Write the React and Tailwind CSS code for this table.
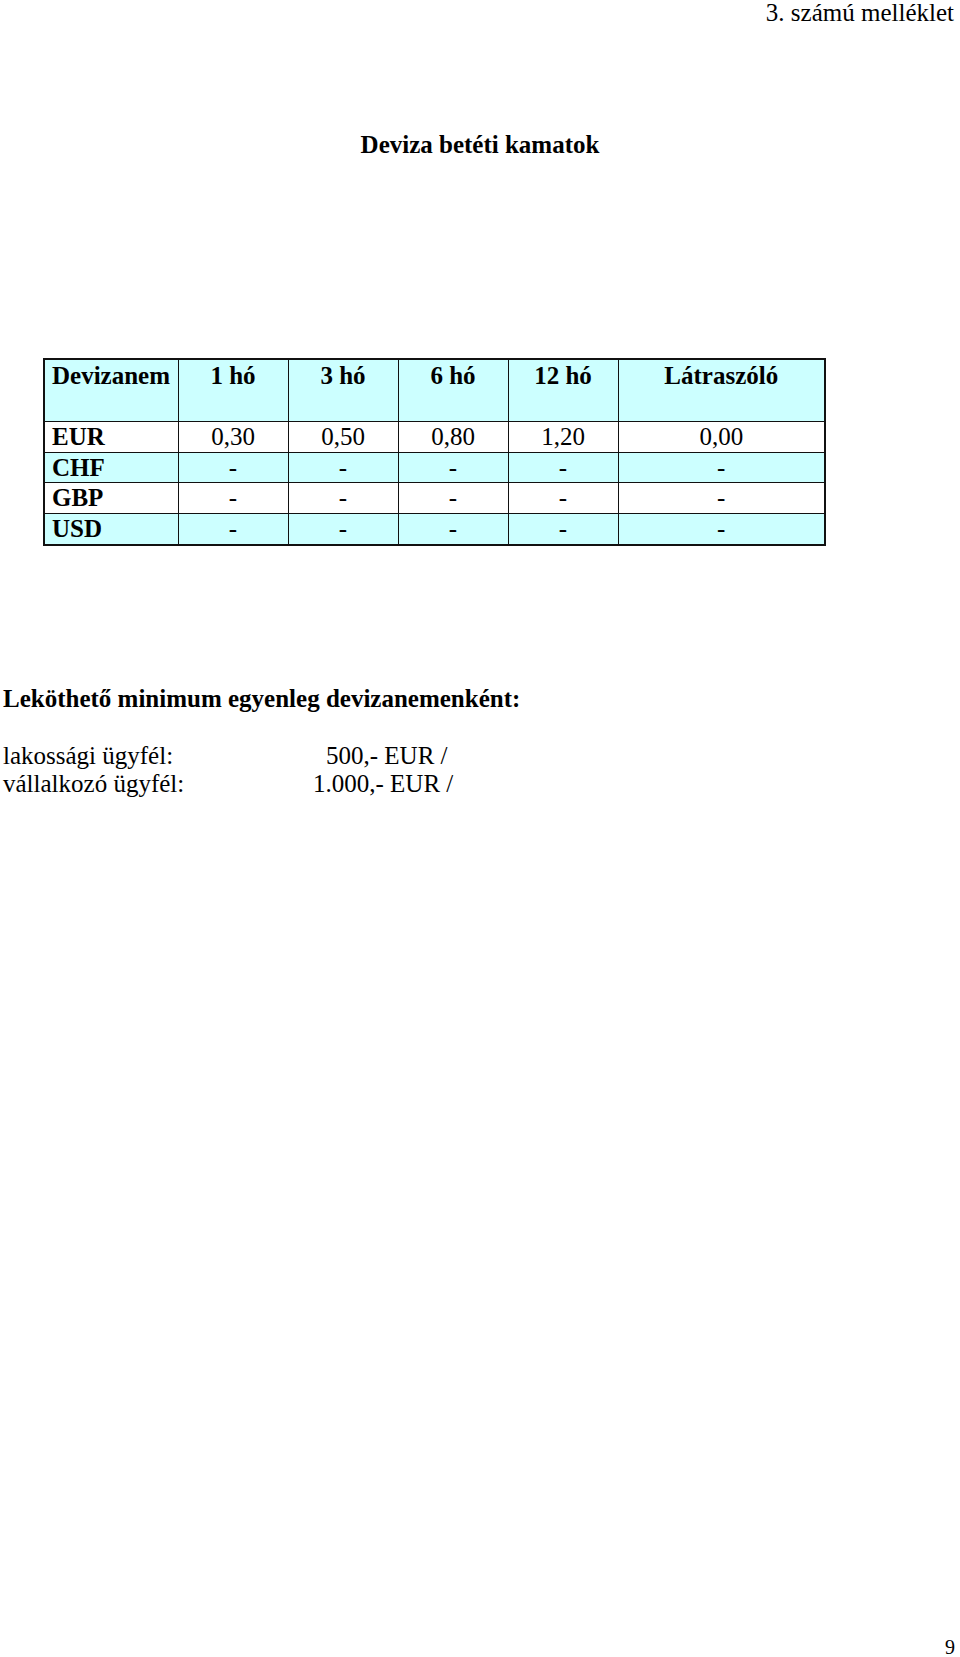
import React from 'react';

const rows = [
  { code: 'EUR', values: ['0,30', '0,50', '0,80', '1,20', '0,00'], bg: 'bg-white', h: 'h-[31px]' },
  { code: 'CHF', values: ['-', '-', '-', '-', '-'], bg: 'bg-[#ccffff]', h: 'h-[30px]' },
  { code: 'GBP', values: ['-', '-', '-', '-', '-'], bg: 'bg-white', h: 'h-[31px]' },
  { code: 'USD', values: ['-', '-', '-', '-', '-'], bg: 'bg-[#ccffff]', h: 'h-[32px]' },
];

const headers = ['1 hó', '3 hó', '6 hó', '12 hó', 'Látraszóló'];

const App = () => {
  return (
    <div
      className="h-[1657px] w-[960px] overflow-hidden bg-white text-black flex flex-col text-[25px] leading-[25px]"
      style={{ fontFamily: '"Liberation Serif", "Times New Roman", serif' }}
    >
      <div className="text-right pr-[6px] pt-0">3. számú melléklet</div>

      <h1 className="mt-[107px] text-center font-bold">Deviza betéti kamatok</h1>

      <div className="mt-[201px] ml-[43px]">
        <table className="table-fixed border-collapse border-2 border-[#111]">
          <colgroup>
            <col className="w-[134px]" />
            <col className="w-[110px]" />
            <col className="w-[110px]" />
            <col className="w-[110px]" />
            <col className="w-[110px]" />
            <col className="w-[207px]" />
          </colgroup>
          <thead>
            <tr className="h-[62px] bg-[#ccffff]">
              <th className="border border-[#111] align-top text-left font-bold pl-[7px] pt-[3px]">Devizanem</th>
              {headers.map((h) => (
                <th key={h} className="border border-[#111] align-top text-center font-bold pt-[3px]">
                  {h}
                </th>
              ))}
            </tr>
          </thead>
          <tbody>
            {rows.map((row) => (
              <tr key={row.code} className={`${row.bg} ${row.h}`}>
                <td className="border border-[#111] text-left font-bold pl-[7px] py-0">{row.code}</td>
                {row.values.map((v, i) => (
                  <td key={i} className="border border-[#111] text-center py-0">
                    {v}
                  </td>
                ))}
              </tr>
            ))}
          </tbody>
        </table>
      </div>

      <p className="mt-[140px] pl-[3px] font-bold">Leköthető minimum egyenleg devizanemenként:</p>

      <div className="mt-[32px] pl-[3px]">
        <div className="flex h-[28px]">
          <span className="w-[323px]">lakossági ügyfél:</span>
          <span>500,- EUR /</span>
        </div>
        <div className="flex h-[28px]">
          <span className="w-[310px]">vállalkozó ügyfél:</span>
          <span>1.000,- EUR /</span>
        </div>
      </div>

      <div className="mt-auto text-right pr-[5px] text-[20px] leading-[19px] h-[19px]">9</div>
    </div>
  );
};

export default App;
